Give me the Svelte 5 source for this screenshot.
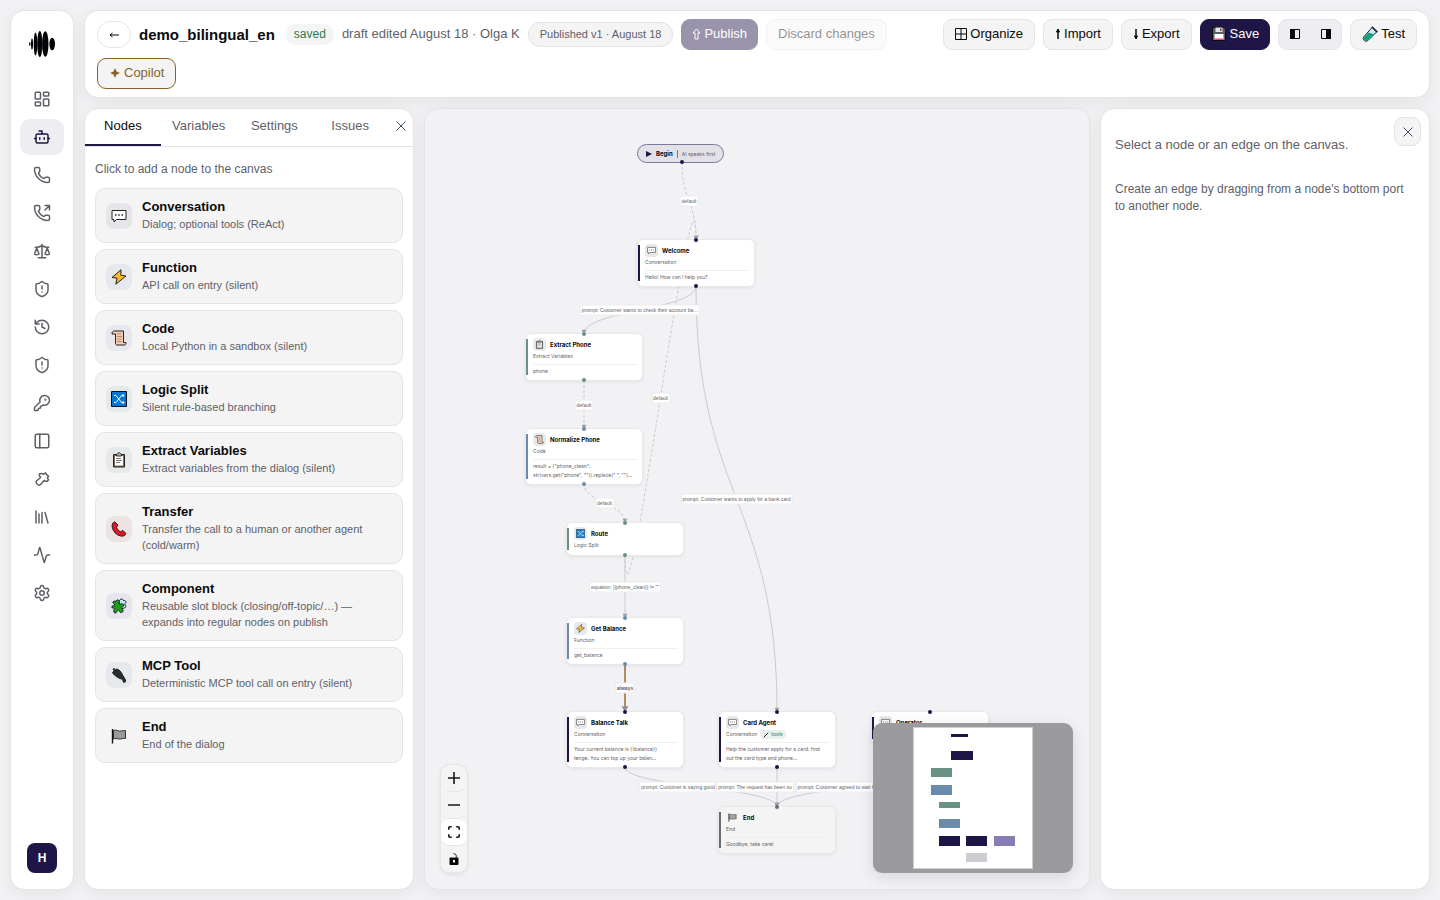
<script lang="ts">
	type Kind =
		| 'conversation'
		| 'function'
		| 'code'
		| 'logic'
		| 'extract'
		| 'transfer'
		| 'component'
		| 'mcp'
		| 'end';

	const navItems = [
		{ id: 'dashboard', label: 'Dashboard' },
		{ id: 'bot', label: 'Agents' },
		{ id: 'phone', label: 'Calls' },
		{ id: 'outgoing', label: 'Outbound' },
		{ id: 'scale', label: 'Evaluations' },
		{ id: 'shield', label: 'Guardrails' },
		{ id: 'history', label: 'History' },
		{ id: 'shield', label: 'Alerts' },
		{ id: 'key', label: 'Keys' },
		{ id: 'panel', label: 'Widgets' },
		{ id: 'tool', label: 'Tools' },
		{ id: 'library', label: 'Library' },
		{ id: 'activity', label: 'Activity' },
		{ id: 'settings', label: 'Settings' }
	];

	const tabs = ['Nodes', 'Variables', 'Settings', 'Issues'];

	const palette: { kind: Kind; title: string; desc: string }[] = [
		{ kind: 'conversation', title: 'Conversation', desc: 'Dialog; optional tools (ReAct)' },
		{ kind: 'function', title: 'Function', desc: 'API call on entry (silent)' },
		{ kind: 'code', title: 'Code', desc: 'Local Python in a sandbox (silent)' },
		{ kind: 'logic', title: 'Logic Split', desc: 'Silent rule-based branching' },
		{ kind: 'extract', title: 'Extract Variables', desc: 'Extract variables from the dialog (silent)' },
		{ kind: 'transfer', title: 'Transfer', desc: 'Transfer the call to a human or another agent (cold/warm)' },
		{
			kind: 'component',
			title: 'Component',
			desc: 'Reusable slot block (closing/off-topic/…) — expands into regular nodes on publish'
		},
		{ kind: 'mcp', title: 'MCP Tool', desc: 'Deterministic MCP tool call on entry (silent)' },
		{ kind: 'end', title: 'End', desc: 'End of the dialog' }
	];

	type FlowNode = {
		kind: Kind;
		x: number;
		y: number;
		title: string;
		type: string;
		body?: string[];
		tools?: boolean;
	};

	const nodes: FlowNode[] = [
		{ kind: 'conversation', x: 213, y: 131, title: 'Welcome', type: 'Conversation', body: ['Hello! How can I help you?'] },
		{ kind: 'extract', x: 101, y: 225, title: 'Extract Phone', type: 'Extract Variables', body: ['phone'] },
		{
			kind: 'code',
			x: 101,
			y: 320,
			title: 'Normalize Phone',
			type: 'Code',
			body: ['result = {"phone_clean":', 'str(vars.get("phone", "")).replace(" ", "")…']
		},
		{ kind: 'logic', x: 142, y: 414, title: 'Route', type: 'Logic Split' },
		{ kind: 'function', x: 142, y: 509, title: 'Get Balance', type: 'Function', body: ['get_balance'] },
		{
			kind: 'conversation',
			x: 142,
			y: 603,
			title: 'Balance Talk',
			type: 'Conversation',
			body: ['Your current balance is {{balance}}', 'tenge. You can top up your balan…']
		},
		{
			kind: 'conversation',
			x: 294,
			y: 603,
			title: 'Card Agent',
			type: 'Conversation',
			tools: true,
			body: ['Help the customer apply for a card: find', 'out the card type and phone…']
		},
		{ kind: 'conversation', x: 447, y: 603, title: 'Operator', type: 'Conversation' },
		{ kind: 'end', x: 294, y: 698, title: 'End', type: 'End', body: ['Goodbye, take care!'] }
	];

	type Edge = {
		from: number[];
		to: number[];
		label: string;
		labelX?: number;
		kind?: 'dashed' | 'always';
		bend?: number;
	};

	const edges: Edge[] = [
		{ from: [257, 53], to: [271, 131], label: 'default', kind: 'dashed' },
		{ from: [200, 446], to: [271, 131], label: 'default', kind: 'dashed', bend: 130 },
		{ from: [271, 177], to: [159, 225], label: 'prompt: Customer wants to check their account ba…' },
		{ from: [271, 177], to: [352, 603], label: 'prompt: Customer wants to apply for a bank card' },
		{ from: [159, 271], to: [159, 320], label: 'default', kind: 'dashed' },
		{ from: [159, 374], to: [200, 414], label: 'default', kind: 'dashed' },
		{ from: [200, 446], to: [200, 509], label: 'equation: {{phone_clean}} != ""' },
		{ from: [200, 555], to: [200, 603], label: 'always', kind: 'always' },
		{ from: [200, 658], to: [352, 698], label: 'prompt: Customer is saying good', labelX: 253 },
		{ from: [352, 658], to: [352, 698], label: 'prompt: The request has been su', labelX: 330 },
		{ from: [505, 658], to: [352, 698], label: 'prompt: Customer agreed to wait for an operator', labelX: 426 }
	];

	const mapNodes = [
		{ x: 78, y: 11, w: 17, h: 3, fill: '#201547' },
		{ x: 78, y: 28, w: 22, h: 9, fill: '#201547' },
		{ x: 58, y: 45, w: 21, h: 9, fill: '#6a9186' },
		{ x: 58, y: 62, w: 21, h: 10, fill: '#6a8bab' },
		{ x: 66, y: 79, w: 21, h: 6, fill: '#6a9186' },
		{ x: 66, y: 96, w: 21, h: 9, fill: '#6a8bab' },
		{ x: 66, y: 113, w: 21, h: 10, fill: '#201547' },
		{ x: 93, y: 113, w: 21, h: 10, fill: '#201547' },
		{ x: 121, y: 113, w: 21, h: 10, fill: '#847eb5' },
		{ x: 93, y: 130, w: 21, h: 9, fill: '#cdccd1' }
	];

	let activeNav = $state(1);
	let activeTab = $state('Nodes');

	// vertical bezier; `bend` overrides the handle length for edges that run back up
	function edgePath({ from, to, bend }: Edge) {
		const reach = bend ?? (to[1] - from[1]) / 2;
		return `M${from[0]},${from[1]} C${from[0]},${from[1] + reach} ${to[0]},${to[1] - reach} ${to[0]},${to[1]}`;
	}
</script>

{#snippet navIcon(id: string)}
	<svg class="nav-icon" viewBox="0 0 24 24" aria-hidden="true">
		{#if id === 'dashboard'}
			<rect x="3" y="3" width="7" height="9" rx="1" /><rect x="14" y="3" width="7" height="5" rx="1" />
			<rect x="14" y="12" width="7" height="9" rx="1" /><rect x="3" y="16" width="7" height="5" rx="1" />
		{:else if id === 'bot'}
			<path d="M12 8V4H8M2 14h2M20 14h2M15 13v2M9 13v2" /><rect x="4" y="8" width="16" height="12" rx="2" />
		{:else if id === 'phone' || id === 'outgoing'}
			{#if id === 'outgoing'}<path d="m16 8 6-6M16 2h6v6" />{/if}
			<path d="M13.832 16.568a1 1 0 0 0 1.213-.303l.355-.465A2 2 0 0 1 17 15h3a2 2 0 0 1 2 2v3a2 2 0 0 1-2 2A18 18 0 0 1 2 4a2 2 0 0 1 2-2h3a2 2 0 0 1 2 2v3a2 2 0 0 1-.8 1.6l-.468.351a1 1 0 0 0-.292 1.233 14 14 0 0 0 6.392 6.384" />
		{:else if id === 'scale'}
			<path d="m16 16 3-8 3 8c-.87.65-1.92 1-3 1s-2.13-.35-3-1ZM2 16l3-8 3 8c-.87.65-1.92 1-3 1s-2.13-.35-3-1ZM7 21h10M12 3v18M3 7h2c2 0 5-1 7-2 2 1 5 2 7 2h2" />
		{:else if id === 'shield'}
			<path d="M20 13c0 5-3.5 7.5-7.66 8.95a1 1 0 0 1-.67-.01C7.5 20.5 4 18 4 13V6a1 1 0 0 1 1-1c2 0 4.5-1.2 6.24-2.72a1.17 1.17 0 0 1 1.52 0C14.51 3.81 17 5 19 5a1 1 0 0 1 1 1zM12 8v4M12 16h.01" />
		{:else if id === 'history'}
			<path d="M3 12a9 9 0 1 0 9-9 9.75 9.75 0 0 0-6.74 2.74L3 8M3 3v5h5M12 7v5l4 2" />
		{:else if id === 'key'}
			<path d="M2.586 17.414A2 2 0 0 0 2 18.828V21a1 1 0 0 0 1 1h3a1 1 0 0 0 1-1v-1a1 1 0 0 1 1-1h1a1 1 0 0 0 1-1v-1a1 1 0 0 1 1-1h.172a2 2 0 0 0 1.414-.586l.814-.814a6.5 6.5 0 1 0-4-4z" />
			<circle cx="16.5" cy="7.5" r=".5" />
		{:else if id === 'panel'}
			<rect x="3" y="3" width="18" height="18" rx="2" /><path d="M9 3v18" />
		{:else if id === 'tool'}
			<path d="M8.6 5.300 11 4.500l3 1.200 2.700-1.900 1.700 2.600 2.400 2-1.700 2.300 1.700 2.200-1.700 2.200-2.700-.1-1.400-1.400-4.800 5.600a2.600 2.600 0 0 1-3.900.2l-1.500-1.500a2.600 2.600 0 0 1 .2-3.600l5.200-4.300-1.900-2.800z" />
		{:else if id === 'library'}
			<path d="m16 6 4 14M12 6v14M8 8v12M4 4v16" />
		{:else if id === 'activity'}
			<path d="M22 12h-2.48a2 2 0 0 0-1.93 1.46l-2.35 8.36a.25.25 0 0 1-.48 0L9.24 2.18a.25.25 0 0 0-.48 0l-2.35 8.36A2 2 0 0 1 4.49 12H2" />
		{:else}
			<path d="M9.671 4.136a2.34 2.34 0 0 1 4.659 0 2.34 2.34 0 0 0 3.319 1.915 2.34 2.34 0 0 1 2.33 4.033 2.34 2.34 0 0 0 0 3.831 2.34 2.34 0 0 1-2.33 4.033 2.34 2.34 0 0 0-3.319 1.915 2.34 2.34 0 0 1-4.659 0 2.34 2.34 0 0 0-3.32-1.915 2.34 2.34 0 0 1-2.33-4.033 2.34 2.34 0 0 0 0-3.831A2.34 2.34 0 0 1 6.35 6.051a2.34 2.34 0 0 0 3.319-1.915" />
			<circle cx="12" cy="12" r="3" />
		{/if}
	</svg>
{/snippet}

{#snippet kindIcon(kind: Kind)}
	<svg class="kind-icon" viewBox="0 0 16 16" aria-hidden="true">
		{#if kind === 'conversation'}
			<path d="M1 2.5h14v9H5.5L3 14v-2.500H1z" fill="#fff" stroke="#222" stroke-linejoin="round" />
			<path d="M4 7h1.500M7.250 7h1.500M10.500 7H12" stroke="#222" stroke-width="1.3" />
		{:else if kind === 'function'}
			<path d="M10 .8 1 8.500l5 .7L4.800 15.200 15 7l-5.200-.8z" fill="#fdb827" stroke="#222" stroke-linejoin="round" />
		{:else if kind === 'code'}
			<path d="M3.500 1h9v11.500H15c0 1.500-.6 2.500-1.500 2.500H6c-1 0-1.500-1-1.500-2V4H1C.8 2 2 1 3.500 1z" fill="#f5cdb4" stroke="#222" stroke-linejoin="round" />
			<path d="M6 4h4.500M6 6.500h5M6 9h4.500M6 11.500h5" stroke="#b9866c" />
		{:else if kind === 'logic'}
			<path d="M.5.5h15v15H.5z" fill="#0078d7" stroke="#111" />
			<path d="M3 4.500h2l5.500 7H13M3 11.500h2l5.500-7H13M11.500 3 13 4.500 11.500 6M11.500 10l1.500 1.500-1.500 1.500" fill="none" stroke="#fff" />
		{:else if kind === 'extract'}
			<path d="M2.500 2.500h11V15h-11z" fill="#8c6a4f" stroke="#222" stroke-linejoin="round" />
			<path d="M4 4h8v9.500H4z" fill="#fff" />
			<path d="M5 6.500h5M5 8.500h6M5 10.500h4" stroke="#777" />
			<path d="M5.500 2.200c1 0 1-1.400 2.500-1.400s1.500 1.400 2.500 1.400V4h-5z" fill="#bbb" stroke="#222" />
		{:else if kind === 'transfer'}
			<path d="M3.800.8C1.500 1.500.8 3.500 1.200 6c.8 4.500 4 8 8.300 9 2.500.5 4.500-.2 5.500-2.500l-3.200-3-2.300 1.300C7.500 9.800 6.200 8 5.500 6.200L7 4z" fill="#e81224" stroke="#222" stroke-linejoin="round" />
		{:else if kind === 'component'}
			<path d="M8 4c0-3 3.500-4 4.500-1.500C15 2 16 4.500 13.500 6c2 2 1.500 4-.5 4l-3 1z" fill="#bfe3ef" stroke="#222" />
			<path d="M2 4c2-2 3 0 3.500-1.500S8.500 2 8 4.500s2.500 1 4 1.500.5 3-1 3 0 2 1 3-1 3-2.500 2.500S9 12 7.500 12 6 15.500 4 15s-1-3.500-.5-4.500S.5 11 .8 8.800 4 8.500 3.800 7 1 5 2 4z" fill="#16a316" stroke="#222" />
		{:else if kind === 'mcp'}
			<path d="M1.500 5.500 3.200 3.800 2 2.200l1-.7 1.500 1.300L5.800 2C8 2.500 10.500 5 11.500 8l3 5-.3 2-1.700.3-1-3C8 11.500 4.500 9.500 2.500 7z" fill="#2b2b2b" stroke="#1b1b1b" stroke-linejoin="round" />
		{:else}
			<path d="M2.500 2.500c3-1.500 5 1.500 8 .5 1.500-.5 2.500-.5 4-.3v7.800c-3-.8-4 1-7 .5-2-.4-3-.8-5 0z" fill="#9a9a9a" stroke="#333" />
			<path d="M1.500 1v14.500" stroke="#111" stroke-width="1.4" />
		{/if}
	</svg>
{/snippet}

{#snippet crossIcon()}
	<svg class="cross" viewBox="0 0 12 12" aria-hidden="true"><path d="m1.500 1.500 9 9M10.500 1.500l-9 9" /></svg>
{/snippet}

<div class="app">
	<nav class="rail" aria-label="Main">
		<a class="logo" href="#home" aria-label="Home">
			<svg viewBox="0 0 26 26">
				<ellipse cx=".8" cy="13" rx=".7" ry="2" /><ellipse cx="3" cy="13" rx="1" ry="5.5" />
				<ellipse cx="6.5" cy="13" rx="1.8" ry="11.5" /><ellipse cx="10.8" cy="13" rx="2.6" ry="13" />
				<ellipse cx="16.3" cy="13" rx="3.2" ry="12.800" /><ellipse cx="23.200" cy="13" rx="2.800" ry="6.300" />
			</svg>
		</a>
		<div class="nav-list">
			{#each navItems as item, i}
				<a
					class="nav-item"
					class:active={i === activeNav}
					href="#{item.label.toLowerCase()}"
					aria-label={item.label}
					onclick={() => (activeNav = i)}
				>
					{@render navIcon(item.id)}
				</a>
			{/each}
		</div>
		<button class="avatar">H</button>
	</nav>

	<div class="main">
		<header class="card topbar">
			<button class="back" aria-label="Back">
				<svg class="glyph" viewBox="0 0 12 12"><path d="M2 6h9M4.500 4 2 6l2.500 2" /></svg>
			</button>
			<h1>demo_bilingual_en</h1>
			<span class="saved">saved</span>
			<span class="draft">draft edited August 18 · Olga K</span>
			<span class="version">Published v1 · August 18</span>
			<button class="btn primary" disabled>
				<svg class="glyph slim" viewBox="0 0 9 12"><path d="M4.500 1 8 5H6v6H3V5H1z" /></svg>Publish
			</button>
			<button class="btn" disabled>Discard changes</button>
			<button class="btn push">
				<svg class="glyph" viewBox="0 0 12 12"><path d="M.5.5h11v11H.5zM6 .5v11M.5 6h11" /></svg>Organize
			</button>
			<button class="btn">
				<svg class="glyph arrow" viewBox="0 0 6 12"><path d="M3 2v9" stroke-width="1.5" /><path class="solid" d="M3 1 1.500 4h3z" /></svg>Import
			</button>
			<button class="btn">
				<svg class="glyph arrow" viewBox="0 0 6 12"><path d="M3 1v9" stroke-width="1.5" /><path class="solid" d="M3 11 1.500 8h3z" /></svg>Export
			</button>
			<button class="btn primary">
				<svg class="pic" viewBox="0 0 16 16" aria-hidden="true">
					<path d="M1.500 1.500h11.500l1.500 1.500v11.500h-13z" fill="#5c5c62" stroke="#0c0c12" />
					<path d="M4.500 1.500h7v4.500h-7z" fill="#e3e3e6" /><path d="M9 2.500h1.500V5H9z" fill="#555" />
					<path d="M3.500 8h9v6h-9z" fill="#fff" /><path d="M3.500 12.500h9V14h-9z" fill="#e8467c" />
				</svg>Save
			</button>
			<div class="segment">
				<button aria-label="Toggle left panel">
					<svg viewBox="0 0 10 10"><path d="M.5.5h9v9h-9z" /><path class="solid" d="M0 0h5v10H0z" /></svg>
				</button>
				<button aria-label="Toggle right panel">
					<svg viewBox="0 0 10 10"><path d="M.5.5h9v9h-9z" /><path class="solid" d="M5 0h5v10H5z" /></svg>
				</button>
			</div>
			<button class="btn">
				<svg class="pic" viewBox="0 0 16 16" aria-hidden="true">
					<path d="m10.500 1 4.500 4.500-9 9c-1.500 1-3 1-4-.2s-1-2.500.2-4z" fill="#cfe6f5" stroke="#222" />
					<path d="m6.500 6.500 5.500 1.800-6.300 5.900c-1.200.8-2.400.7-3.300-.2s-.9-2 .1-3.300z" fill="#10a37f" />
					<path d="m9.800.8 5.400 5.400" stroke="#222" stroke-width="1.6" />
				</svg>Test
			</button>
			<button class="btn copilot">
				<svg class="glyph spark" viewBox="0 0 12 12"><path d="M6 1 7.500 4.500 11 6 7.500 7.500 6 11 4.500 7.500 1 6l3.500-1.500z" /></svg>Copilot
			</button>
		</header>

		<div class="workspace">
			<aside class="card side">
				<div class="tabs" role="tablist">
					{#each tabs as tab}
						<button role="tab" aria-selected={tab === activeTab} class:active={tab === activeTab} onclick={() => (activeTab = tab)}>
							{tab}
						</button>
					{/each}
					<button class="tabs-close" aria-label="Close panel">{@render crossIcon()}</button>
				</div>
				<div class="palette">
					<p>Click to add a node to the canvas</p>
					{#each palette as item}
						<button class="palette-item">
							<span class="tile {item.kind}">{@render kindIcon(item.kind)}</span>
							<span class="palette-text">
								<strong>{item.title}</strong>
								<span>{item.desc}</span>
							</span>
						</button>
					{/each}
				</div>
			</aside>

			<main class="canvas">
				<svg class="edges" aria-hidden="true">
					<defs>
						<marker id="arrow" viewBox="0 0 6 6" refX="3" refY="6" markerWidth="5" markerHeight="5" markerUnits="userSpaceOnUse">
							<path d="M0 1h6L3 6z" fill="#9c9ca2" />
						</marker>
						<marker id="arrow-big" viewBox="0 0 6 6" refX="3" refY="6" markerWidth="8" markerHeight="7" markerUnits="userSpaceOnUse">
							<path d="M0 1h6L3 6z" fill="#8f8f95" />
						</marker>
					</defs>
					{#each edges as edge}
						<path class={edge.kind} d={edgePath(edge)} marker-end={edge.kind === 'always' ? 'url(#arrow-big)' : 'url(#arrow)'} />
					{/each}
				</svg>

				{#each edges as edge}
					<span
						class="edge-label"
						class:strong={edge.kind === 'always'}
						style="left: {edge.labelX ?? (edge.from[0] + edge.to[0]) / 2}px; top: {(edge.from[1] + edge.to[1]) / 2}px"
					>
						{edge.label}
					</span>
				{/each}

				<div class="begin">
					<svg viewBox="0 0 6 6" aria-hidden="true"><path d="M0 0 6 3 0 6z" /></svg>
					<strong>Begin</strong>
					<span>AI speaks first</span>
				</div>

				{#each nodes as node}
					<article class="node {node.kind}" style="left: {node.x}px; top: {node.y}px">
						<div class="node-head">
							<span class="tile {node.kind}">{@render kindIcon(node.kind)}</span>
							<strong>{node.title}</strong>
						</div>
						<div class="node-type">
							{node.type}
							{#if node.tools}
								<span class="tools">
									<svg viewBox="0 0 6 6" aria-hidden="true"><path d="M.8 5.200 4 2l1.200-1.200" /></svg>tools
								</span>
							{/if}
						</div>
						{#if node.body}
							<div class="node-body">
								{#each node.body as line}<div>{line}</div>{/each}
							</div>
						{/if}
						<i class="port in"></i>
						{#if node.kind !== 'end'}<i class="port out"></i>{/if}
					</article>
				{/each}

				<div class="controls">
					<button aria-label="Zoom in"><svg viewBox="0 0 12 12"><path d="M6 0v12M0 6h12" /></svg></button>
					<button aria-label="Zoom out"><svg viewBox="0 0 12 12"><path d="M0 6h12" /></svg></button>
					<button class="lit" aria-label="Fit view">
						<svg viewBox="0 0 12 12"><path d="M.8 3.800v-2a1 1 0 0 1 1-1h2M8.200.8h2a1 1 0 0 1 1 1v2M11.200 8.200v2a1 1 0 0 1-1 1h-2M3.800 11.200h-2a1 1 0 0 1-1-1v-2" /></svg>
					</button>
					<button aria-label="Toggle interactivity">
						<svg viewBox="0 0 12 12">
							<path class="solid" d="M2.500 4.500h7a1 1 0 0 1 1 1v5.500a1 1 0 0 1-1 1h-7a1 1 0 0 1-1-1V5.500a1 1 0 0 1 1-1zM5 7v2.500h2V7z" fill-rule="evenodd" />
							<path class="shackle" d="M5.500.7c2 0 2.800 1 2.800 2.500v1.500" />
						</svg>
					</button>
				</div>

				<svg class="minimap" viewBox="0 0 200 150" role="img" aria-label="Mini map">
					<rect width="200" height="150" fill="#9b9b9d" />
					<rect x="40.5" y="4.5" width="119" height="141" fill="#fff" stroke="#cfcfd2" />
					{#each mapNodes as n}
						<rect x={n.x} y={n.y} width={n.w} height={n.h} fill={n.fill} />
					{/each}
				</svg>
			</main>

			<aside class="card inspector">
				<button class="inspector-close" aria-label="Close inspector">{@render crossIcon()}</button>
				<p class="lead">Select a node or an edge on the canvas.</p>
				<p>Create an edge by dragging from a node's bottom port to another node.</p>
			</aside>
		</div>
	</div>
</div>

<style>
	:global(body) {
		margin: 0;
		background: #f2f2f4;
	}

	.app {
		--ink: #0a0a0c;
		--muted: #5f5f68;
		--navy: #201547;
		--line: #e4e4e6;
		--soft: #f4f4f4;
		display: flex;
		gap: 10px;
		min-height: 100vh;
		padding: 10px;
		box-sizing: border-box;
		color: var(--ink);
		font: 13px/16px 'Liberation Sans', Arial, sans-serif;
	}

	.app :global(*) { box-sizing: border-box; }

	button {
		margin: 0;
		padding: 0;
		border: 0;
		background: none;
		color: inherit;
		font: inherit;
		cursor: pointer;
	}

	svg {
		display: block;
		flex: none;
		fill: none;
	}

	p, h1 { margin: 0; }

	.card, .rail {
		background: #fff;
		border: 1px solid var(--line);
		border-radius: 14px;
		box-shadow: 0 4px 16px rgba(20, 20, 40, 0.06);
	}

	.rail {
		display: flex;
		flex-direction: column;
		align-items: center;
		flex: none;
		width: 64px;
		padding: 20px 0 16px;
	}

	.logo svg {
		width: 26px;
		height: 26px;
		fill: #050507;
	}

	.nav-list {
		display: flex;
		flex-direction: column;
		gap: 2px;
		flex: 1;
		margin-top: 24px;
	}

	.nav-item {
		display: grid;
		place-items: center;
		width: 44px;
		height: 36px;
		border-radius: 10px;
		color: var(--muted);
	}

	.nav-item.active {
		background: #ededf2;
		color: var(--navy);
	}

	.nav-icon {
		width: 18px;
		height: 18px;
		stroke: currentColor;
		stroke-width: 2;
		stroke-linecap: round;
		stroke-linejoin: round;
	}

	.avatar {
		width: 30px;
		height: 30px;
		border-radius: 8px;
		background: var(--navy);
		color: #fff;
		font-size: 12px;
		font-weight: 700;
	}

	.main {
		display: flex;
		flex-direction: column;
		gap: 10px;
		flex: 1;
		min-width: 0;
	}

	.topbar {
		display: flex;
		flex-wrap: wrap;
		align-items: center;
		gap: 8px;
		padding: 8px 12px;
	}

	.back {
		display: grid;
		place-items: center;
		width: 34px;
		height: 27px;
		border: 1px solid var(--line);
		border-radius: 14px;
	}

	h1 {
		padding-right: 3px;
		font-size: 15px;
		line-height: 20px;
	}

	.saved {
		padding: 3px 8px;
		border-radius: 11px;
		background: var(--soft);
		color: #2f7a50;
		font-size: 12px;
		line-height: 15px;
	}

	.draft {
		padding-bottom: 1px;
		color: var(--muted);
	}

	.version {
		padding: 3px 11px;
		border: 1px solid var(--line);
		border-radius: 12px;
		background: var(--soft);
		color: var(--muted);
		font-size: 11px;
		line-height: 17px;
	}

	.btn {
		display: flex;
		align-items: center;
		gap: 3px;
		height: 31px;
		padding: 0 11px 2px;
		border: 1px solid var(--line);
		border-radius: 9px;
		background: var(--soft);
	}

	.btn:disabled {
		opacity: 0.45;
		cursor: default;
	}

	.btn.primary {
		padding: 0 10px 2px;
		border-color: var(--navy);
		background: var(--navy);
		color: #fff;
		font-weight: 500;
	}

	.btn.copilot {
		border-color: #8a6124;
		color: #8a6124;
	}

	.push { margin-left: auto; }

	.glyph {
		width: 12px;
		height: 12px;
		stroke: currentColor;
	}

	.glyph.slim { width: 9px; }
	.glyph.arrow { width: 6px; }
	.glyph.spark { fill: currentColor; stroke: none; }
	.solid { fill: currentColor; }

	.pic {
		width: 16px;
		height: 16px;
	}

	.segment {
		display: flex;
		height: 31px;
		padding-bottom: 2px;
		border: 1px solid var(--line);
		border-radius: 9px;
		background: #ededf2;
	}

	.segment button {
		display: grid;
		place-items: center;
		width: 31px;
	}

	.segment svg {
		width: 10px;
		height: 10px;
		stroke: currentColor;
	}

	.segment .solid { stroke: none; }

	.workspace {
		display: grid;
		grid-template-columns: 330px minmax(0, 1fr) 330px;
		gap: 10px;
		flex: 1;
	}

	.side { overflow: hidden; }

	.tabs {
		display: grid;
		grid-template-columns: repeat(4, 1fr) 25px;
		height: 38px;
		border-bottom: 1px solid var(--line);
	}

	.tabs button {
		display: grid;
		place-items: center;
		padding-bottom: 2px;
		border-bottom: 2px solid transparent;
		color: var(--muted);
	}

	.tabs button.active {
		border-color: var(--navy);
		color: var(--ink);
	}

	.cross {
		width: 12px;
		height: 12px;
		stroke: #3d4f6b;
	}

	.palette {
		display: flex;
		flex-direction: column;
		gap: 6px;
		padding: 14px 10px;
	}

	.palette p {
		margin-bottom: 5px;
		color: var(--muted);
		font-size: 12px;
	}

	.palette-item {
		display: flex;
		align-items: center;
		gap: 10px;
		padding: 10px;
		border: 1px solid var(--line);
		border-radius: 10px;
		background: var(--soft);
		text-align: left;
	}

	.palette-text {
		display: flex;
		flex-direction: column;
		gap: 2px;
		color: var(--muted);
		font-size: 11px;
	}

	.palette-text strong {
		color: var(--ink);
		font-size: 13px;
		line-height: 15px;
	}

	.tile {
		display: grid;
		place-items: center;
		flex: none;
		width: 26px;
		height: 26px;
		border-radius: 8px;
		background: #e5e5ea;
	}

	.tile.function, .tile.code, .tile.mcp { background: #e5e8ec; }
	.tile.logic, .tile.extract { background: #e5e9e9; }
	.tile.transfer { background: #ece4e3; }
	.tile.component { background: #e6e5ee; }
	.tile.end { background: none; }

	.kind-icon {
		width: 16px;
		height: 16px;
	}

	.canvas {
		position: relative;
		overflow: hidden;
		min-height: 770px;
		border: 1px solid var(--line);
		border-radius: 14px;
		background: radial-gradient(circle, #ececef 0, transparent 1px) 0 0 / 9px 9px #f2f2f4;
		box-shadow: 0 4px 16px rgba(20, 20, 40, 0.06);
	}

	.edges {
		position: absolute;
		inset: 0;
		width: 100%;
		height: 100%;
		stroke: #cbcbcf;
	}

	.edges marker { stroke: none; }
	.edges .dashed { stroke-dasharray: 3 2; }

	.edges .always {
		stroke: #9a6b2c;
		stroke-width: 1.5;
	}

	.edge-label {
		position: absolute;
		transform: translate(-50%, -50%);
		padding: 1px;
		border: 1px solid #ececef;
		border-radius: 1px;
		background: #fff;
		color: var(--muted);
		font-size: 5px;
		line-height: 7px;
		white-space: nowrap;
	}

	.edge-label.strong { font-weight: 700; }

	.begin {
		position: absolute;
		left: 212px;
		top: 35px;
		display: flex;
		align-items: center;
		gap: 4px;
		height: 19px;
		padding: 0 8px;
		border: 1px solid #7e789a;
		border-radius: 10px;
		background: #e2e1e8;
		font-family: Inter, sans-serif;
		font-size: 6px;
		line-height: 8px;
		white-space: nowrap;
	}

	.begin svg {
		width: 6px;
		height: 6px;
		fill: var(--navy);
	}

	.begin span {
		padding-left: 4px;
		border-left: 1px solid #7e789a;
		color: var(--muted);
		font-size: 5px;
	}

	.begin::after {
		content: '';
		position: absolute;
		left: 42px;
		bottom: -2px;
		width: 4px;
		height: 4px;
		border-radius: 2px;
		background: var(--navy);
	}

	.node {
		--accent: var(--navy);
		position: absolute;
		width: 116px;
		min-height: 32px;
		padding: 4px 5px 4px 7px;
		border-radius: 5px;
		background: #fff;
		box-shadow: 0 0 0 1px #e9e9ec, 0 1px 4px rgba(20, 20, 40, 0.12);
		font-family: Inter, sans-serif;
		font-size: 5px;
		line-height: 9px;
		color: var(--muted);
	}

	.node.extract, .node.logic { --accent: #6a9186; }
	.node.code, .node.function { --accent: #6a8bab; }
	.node.end { --accent: #6b6b74; background: var(--soft); }

	.node::before {
		content: '';
		position: absolute;
		left: 0;
		top: 5px;
		bottom: 5px;
		width: 2px;
		background: var(--accent);
	}

	.node-head {
		display: flex;
		align-items: center;
		gap: 4px;
		margin-bottom: 1px;
	}

	.node-head strong {
		color: var(--ink);
		font-size: 6px;
	}

	.node .tile {
		width: 13px;
		height: 13px;
		border-radius: 4px;
		opacity: 0.9;
	}

	.node .kind-icon {
		width: 9px;
		height: 9px;
	}

	.node-type {
		display: flex;
		gap: 3px;
	}

	.tools {
		display: flex;
		align-items: center;
		gap: 2px;
		padding: 0 3px;
		border-radius: 4px;
		background: #e7f0ec;
		color: #2f7a50;
	}

	.tools svg {
		width: 6px;
		height: 6px;
		stroke: #222;
	}

	.node-body {
		margin-top: 3px;
		padding-top: 2px;
		border-top: 1px solid #efeff1;
		white-space: nowrap;
	}

	.port {
		position: absolute;
		left: 56px;
		width: 4px;
		height: 4px;
		border-radius: 2px;
		background: var(--accent);
	}

	.port.in { top: -2px; }
	.port.out { bottom: -2px; }

	.controls {
		position: absolute;
		left: 16px;
		bottom: 16px;
		overflow: hidden;
		border-radius: 9px;
		background: var(--soft);
		box-shadow: 0 0 0 1px #e6e6e9, 0 1px 4px rgba(20, 20, 40, 0.12);
	}

	.controls button {
		display: grid;
		place-items: center;
		width: 26px;
		height: 27px;
		border-bottom: 1px solid #e6e6e9;
		border-radius: 9px;
	}

	.controls .lit { background: #fff; }

	.controls svg {
		width: 12px;
		height: 12px;
		stroke: #18181b;
		stroke-width: 1.6;
	}

	.controls .solid { fill: #050507; stroke: none; }
	.controls .shackle { stroke-width: 1; }

	.minimap {
		position: absolute;
		right: 16px;
		bottom: 16px;
		width: 200px;
		height: 150px;
		border-radius: 9px;
		box-shadow: 0 4px 16px rgba(20, 20, 40, 0.12);
	}

	.inspector {
		position: relative;
		padding: 27px 14px;
		color: var(--muted);
		font-size: 12px;
		line-height: 17px;
	}

	.inspector .lead {
		margin-bottom: 28px;
		font-size: 13px;
	}

	.inspector-close {
		position: absolute;
		top: 8px;
		right: 8px;
		display: grid;
		place-items: center;
		width: 27px;
		height: 29px;
		border: 1px solid var(--line);
		border-radius: 9px;
		background: var(--soft);
	}
</style>
